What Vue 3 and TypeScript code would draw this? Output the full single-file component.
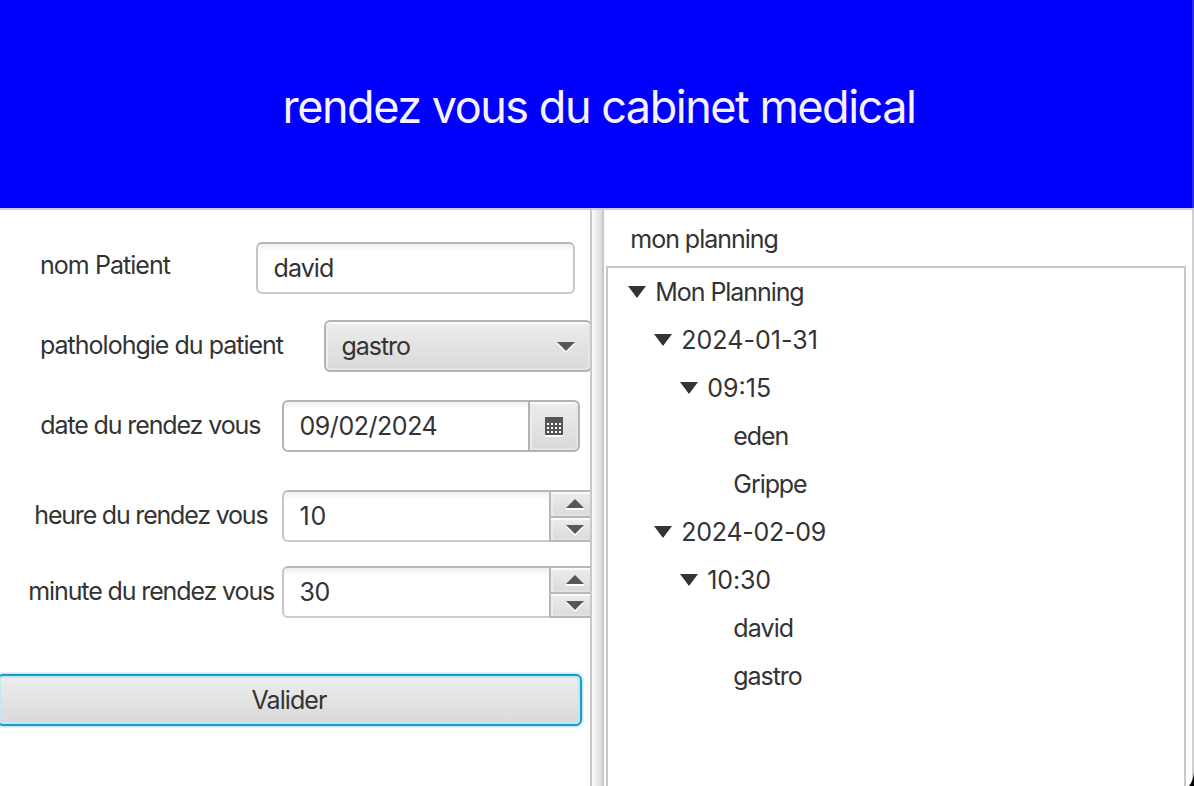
<script setup lang="ts">
import { ref } from 'vue'

interface TreeRow {
  text: string
  level: number
  open: boolean
  kind: string
}

const nom = ref('david')
const pathologie = ref('gastro')
const date = ref('09/02/2024')

const spinners = ref([
  { id: 'heure', label: 'heure du rendez vous', value: '10' },
  { id: 'minute', label: 'minute du rendez vous', value: '30' },
])

const rows: TreeRow[] = [
  { text: 'Mon Planning', level: 0, open: true, kind: 'root' },
  { text: '2024-01-31', level: 1, open: true, kind: 'day january' },
  { text: '09:15', level: 2, open: true, kind: 'time' },
  { text: 'eden', level: 3, open: false, kind: 'leaf' },
  { text: 'Grippe', level: 3, open: false, kind: 'leaf' },
  { text: '2024-02-09', level: 1, open: true, kind: 'day' },
  { text: '10:30', level: 2, open: true, kind: 'time half' },
  { text: 'david', level: 3, open: false, kind: 'leaf patient' },
  { text: 'gastro', level: 3, open: false, kind: 'leaf' },
]
</script>

<template>
  <div class="window">
    <header class="banner"><h1>rendez vous du cabinet medical</h1></header>
    <main class="split">
      <section class="form">
        <div class="row row-nom">
          <label>nom Patient</label>
          <div class="field"><span>{{ nom }}</span></div>
        </div>
        <div class="row row-patho">
          <label>patholohgie du patient</label>
          <div class="combo">
            <span>{{ pathologie }}</span>
            <svg width="18" height="11" viewBox="0 0 18 11">
              <path d="M0 2h18l-9 9z" fill="#fff" /><path d="M0 0h18l-9 9z" fill="#575757" />
            </svg>
          </div>
        </div>
        <div class="row row-date">
          <label>date du rendez vous</label>
          <div class="picker">
            <div class="field"><span>{{ date }}</span></div>
            <div class="calendar">
              <svg width="18" height="20" viewBox="0 0 18 20" shape-rendering="crispEdges">
                <path d="M0 2h18v18H0z" fill="#fff" />
                <path d="M0 0h18v18H0z" fill="#555" />
                <path
                  d="M2 6h2v2H2zm4 0h2v2H6zm4 0h2v2h-2zm4 0h2v2h-2zM2 10h2v2H2zm4 0h2v2H6zm4 0h2v2h-2zm4 0h2v2h-2zM2 14h2v2H2zm4 0h2v2H6zm4 0h2v2h-2zm4 0h2v2h-2z"
                  fill="#fff"
                />
              </svg>
            </div>
          </div>
        </div>
        <div v-for="s in spinners" :key="s.id" class="row" :class="`row-${s.id}`">
          <label>{{ s.label }}</label>
          <div class="spinner">
            <div class="field"><span>{{ s.value }}</span></div>
            <div class="steps">
              <div class="step up">
                <svg width="18" height="11" viewBox="0 0 18 11">
                  <path d="M0 11h18V9H0z" fill="#fff" /><path d="M0 9h18L9 0z" fill="#575757" />
                </svg>
              </div>
              <div class="step">
                <svg width="18" height="11" viewBox="0 0 18 11">
                  <path d="M0 2h18l-9 9z" fill="#fff" /><path d="M0 0h18l-9 9z" fill="#575757" />
                </svg>
              </div>
            </div>
          </div>
        </div>
        <button class="submit" type="button"><span>Valider</span></button>
      </section>
      <div class="divider"></div>
      <section class="planning">
        <h2>mon planning</h2>
        <ul class="tree">
          <li v-for="(r, i) in rows" :key="i" :class="[`level-${r.level}`, r.kind]">
            <svg v-if="r.open" width="18" height="12" viewBox="0 0 18 12"><path d="M0 0h18L9 12z" fill="#333" /></svg>
            <span>{{ r.text }}</span>
          </li>
        </ul>
      </section>
    </main>
    <svg class="corner" width="5" height="14" viewBox="0 0 5 14"><path d="M5 0v14H0C3 10 4.600 6 5 0z" fill="#000" /></svg>
  </div>
</template>

<style>
body { margin: 0; overflow: hidden; }
</style>

<style scoped>
.window {
  position: relative;
  width: 1194px;
  height: 786px;
  display: flex;
  flex-direction: column;
  overflow: hidden;
  background: #fff;
  color: #333;
  font-family: Inter, "Liberation Sans", sans-serif;
  font-size: 25px;
  letter-spacing: -1px;
  white-space: nowrap;
}
.window * { box-sizing: border-box; }
svg { display: block; flex: none; }
.banner {
  height: 210px;
  flex: none;
  background: #00f;
  border-bottom: 2px solid #c8c8ea;
  box-shadow: inset -2px 0 #2c2cdc;
}
h1 {
  margin: 0;
  padding: 80px 0 0 282.500px;
  color: #f6f2ff;
  font-size: 45px;
  line-height: 54px;
  font-weight: 400;
  letter-spacing: -1.48px;
}
.split { flex: 1; min-height: 0; display: flex; border-right: 2px solid #d0d0d0; }
.form { width: 590px; flex: none; padding-top: 32px; overflow: hidden; }
.row { display: flex; width: 640px; height: 52px; }
label { flex: none; line-height: 50px; }
.row-nom { padding-left: 40px; margin-bottom: 26px; }
.row-nom label { width: 216px; line-height: 46px; letter-spacing: -0.95px; }
.row-nom .field { width: 319px; letter-spacing: -0.9px; }
.row-patho { padding-left: 40px; margin-bottom: 28px; }
.row-patho label { width: 284px; letter-spacing: -0.99px; }
.row-date { padding-left: 40.300px; margin-bottom: 38px; }
.row-date label { width: 241.700px; letter-spacing: -1.12px; }
.row-heure { padding-left: 34.300px; margin-bottom: 24px; }
.row-heure label { width: 247.700px; letter-spacing: -1.2px; }
.row-heure .field { letter-spacing: 0.9px; }
.row-minute { padding-left: 28.300px; margin-bottom: 56px; }
.row-minute label { width: 253.700px; letter-spacing: -1.12px; }
.row-minute .field { letter-spacing: -0.44px; }
.field {
  height: 52px;
  padding-left: 15.500px;
  line-height: 48px;
  border: 2px solid #c6c6c6;
  border-top-color: #b6b6b6;
  border-bottom-color: #cbcbcb;
  border-radius: 6px;
  background: linear-gradient(#f0f0f0, #fff 8px);
}
.combo {
  display: flex;
  align-items: center;
  justify-content: space-between;
  width: 268px;
  height: 52px;
  padding: 0 15px 0 15.500px;
  border: 2px solid #b3b3b3;
  border-radius: 6px;
  background: linear-gradient(#ededed, #d9d9d9);
  box-shadow: inset 0 2px #fafafa, inset 2px 0 #ececec, inset -2px -2px #e4e4e4;
  letter-spacing: -1.03px;
}
.combo svg { margin-top: 3px; }
.picker { display: flex; width: 298px; }
.picker .field {
  width: 248px;
  border-color: #b3b3b3;
  border-radius: 6px 0 0 6px;
  letter-spacing: -0.46px;
}
.calendar {
  display: flex;
  align-items: center;
  justify-content: center;
  width: 52px;
  margin-left: -2px;
  padding-top: 2px;
  border: 2px solid #b3b3b3;
  border-radius: 0 6px 6px 0;
  background: linear-gradient(#ededed, #d9d9d9);
  box-shadow: inset 0 2px #fafafa, inset 2px 0 #ececec, inset -2px -2px #e4e4e4;
}
.spinner { display: flex; width: 320px; }
.spinner .field { width: 267px; border-right: 0; border-radius: 6px 0 0 6px; }
.steps { display: flex; flex-direction: column; width: 52px; border: 2px solid #b8b8b8; background: #b8b8b8; gap: 2px; }
.step {
  display: flex;
  justify-content: center;
  height: 22px;
  padding-top: 7px;
  background: linear-gradient(#ededed, #dadada);
  box-shadow: inset 0 2px #fafafa, inset 2px 0 #ececec, inset 0 -2px #e2e2e2;
}
.step.up { height: 24px; }
.submit {
  display: block;
  width: 585px;
  height: 52px;
  margin: 0 0 0 -3px;
  padding: 0 0 0 252.500px;
  border: 2px solid #1b9acb;
  border-radius: 6px;
  background: linear-gradient(#ededed, #d9d9d9);
  box-shadow: 0 0 0 1px #b8edfa, 0 0 0 2px #dcf8fe, inset 0 0 0 2px #c3e6ef, inset 0 2px #c5f1fa;
  color: inherit;
  font: inherit;
  line-height: 48px;
  text-align: left;
  letter-spacing: -0.92px;
}
.divider {
  width: 14px;
  flex: none;
  border: solid #c8c8c8;
  border-width: 0 2px;
  background: linear-gradient(90deg, #fbfbfb, #dadada);
}
.planning { display: flex; flex-direction: column; flex: 1; padding: 0 6px 0 2px; }
h2 {
  margin: 0;
  padding-left: 24.300px;
  height: 56px;
  font-size: 25px;
  font-weight: 400;
  line-height: 58px;
  letter-spacing: -1.03px;
}
.tree {
  flex: 1;
  margin: 0;
  padding: 0;
  list-style: none;
  border: 2px solid #c8c8c8;
  border-bottom: 0;
}
.tree li { display: flex; align-items: center; height: 48px; gap: 9.300px; letter-spacing: -1.06px; }
.level-0 { padding-left: 20px; }
.level-1 { padding-left: 46px; }
.level-2 { padding-left: 72px; }
.level-3 { padding-left: 125.300px; }
.tree .root { letter-spacing: -1.07px; }
.tree .day { letter-spacing: -0.25px; }
.tree .january { letter-spacing: 0.03px; }
.tree .time { letter-spacing: 0; }
.tree .half { letter-spacing: -0.18px; }
.tree .patient { letter-spacing: -0.9px; }
.corner { position: absolute; right: 0; bottom: 0; }
</style>
